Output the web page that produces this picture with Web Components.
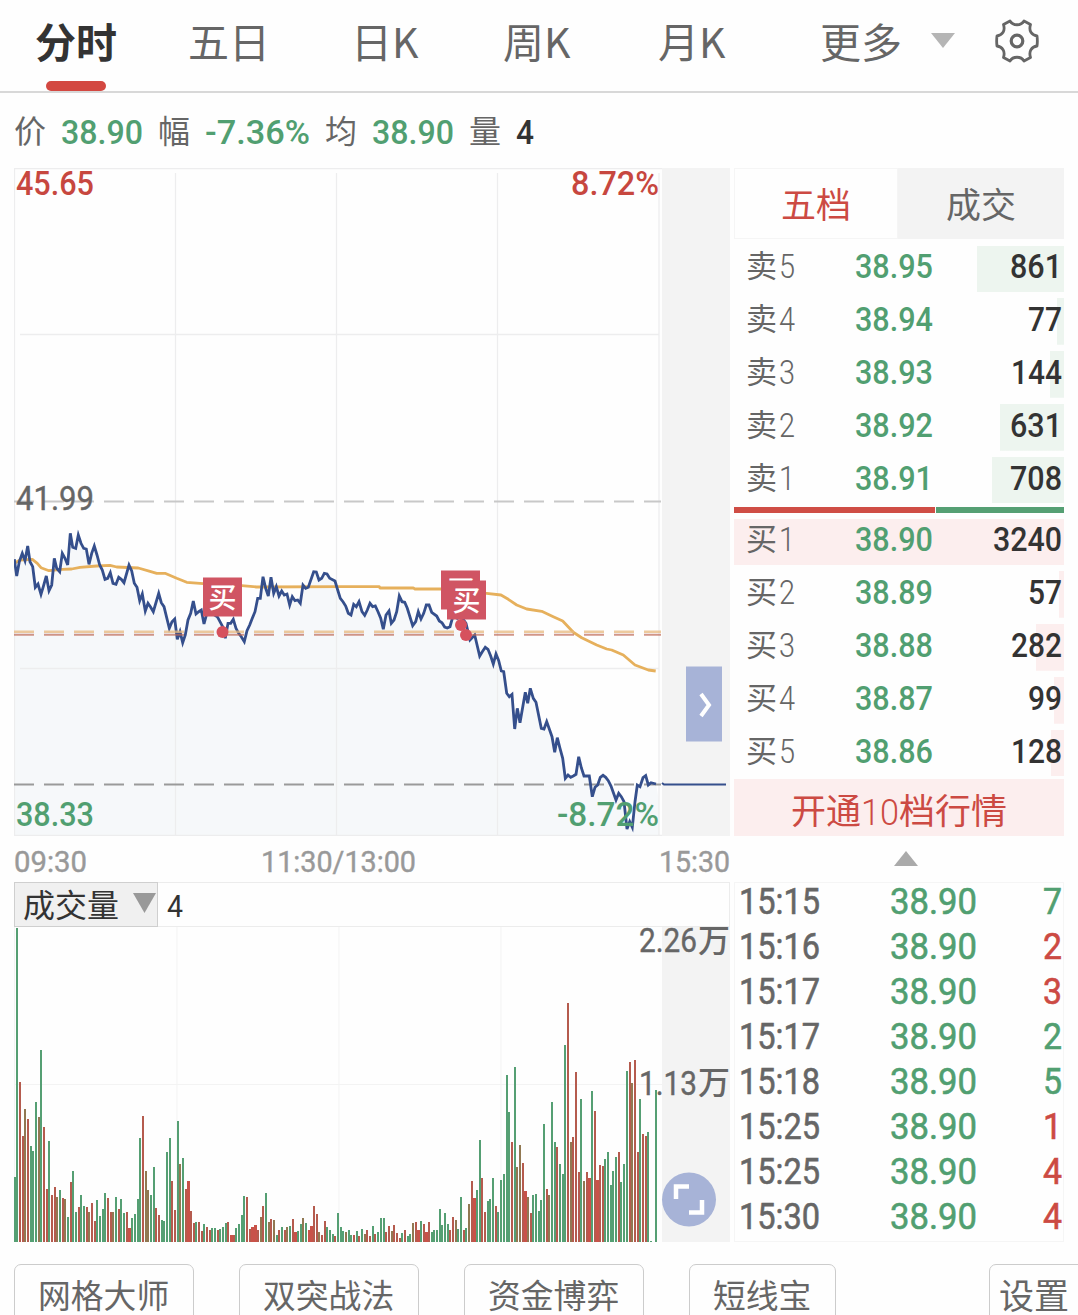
<!DOCTYPE html>
<html lang="zh-CN">
<head>
<meta charset="utf-8">
<title>分时</title>
<style>
html, body{ margin:0; padding:0; }
body{
    width       : 1078px;
    height      : 1315px;
    overflow    : hidden;
    background  : #fefefe;
    color       : #666;
    font-family : Roboto, "Noto Sans CJK SC", sans-serif;
    --red       : #cc4a43;
    --green     : #519f71;
    --line      : #f0f0f0;
    --pane      : #f3f3f3;
}
main{
    display                 : grid;
    grid-template-columns   : 716px 330px;
    column-gap              : 4px;
    margin-left             : 14px;
    height                  : 1074px;
}
</style>
</head>
<body>
<chart-tabs></chart-tabs>
<quote-line>
    <fit-text w="32" size="32">价</fit-text>
    <fit-text w="82" size="33" weight="500" color="var(--green)">38.90</fit-text>
    <fit-text w="32" size="32">幅</fit-text>
    <fit-text w="105" size="33" weight="500" color="var(--green)">-7.36%</fit-text>
    <fit-text w="32" size="32">均</fit-text>
    <fit-text w="82" size="33" weight="500" color="var(--green)">38.90</fit-text>
    <fit-text w="32" size="32">量</fit-text>
    <fit-text w="18" size="33" weight="500" color="#333">4</fit-text>
</quote-line>
<main>
    <section>
        <price-chart></price-chart>
        <time-axis></time-axis>
        <volume-head></volume-head>
        <volume-chart></volume-chart>
    </section>
    <section>
        <order-book></order-book>
        <trade-list></trade-list>
    </section>
</main>
<tool-bar>
    <tool-button style="width:180px">网格大师</tool-button>
    <tool-button style="width:180px">双突战法</tool-button>
    <tool-button style="width:180px">资金博弈</tool-button>
    <tool-button style="width:147px">短线宝</tool-button>
    <tool-button class="last" style="width:104px">设置</tool-button>
</tool-bar>

<script>
// #region HELPERS
function attach( elm, html ){
    elm.attachShadow( { mode: 'open' } );
    elm.shadowRoot.innerHTML = html;
    return elm.shadowRoot;
}

// One line of text squeezed to a fixed width
function fit( txt, w, size, weight=400, color='currentColor' ){
    return `<fit-text w="${w}" size="${size}" weight="${weight}" color="${color}">${txt}</fit-text>`;
}
// #endregion

// #region FIT TEXT
class FitText extends HTMLElement{
    connectedCallback(){
        if( this.shadowRoot ) return;
        const w     = parseFloat( this.getAttribute( 'w' ) );
        const size  = parseFloat( this.getAttribute( 'size' ) );
        const color = this.getAttribute( 'color' ) || 'currentColor';
        const txt   = this.textContent;
        const base  = size * ( /[^\x00-\x7f]/.test( txt ) ? 0.85 : 0.855 );
        attach( this, `
        <style>
        :host{ display:block; flex:none; width:${w}px; height:${size}px; }
        svg{ display:block; overflow:visible; }
        text{
            font-size    : ${size}px;
            font-weight  : ${ this.getAttribute( 'weight' ) || 400 };
            fill         : ${color};
            stroke       : ${color};
            stroke-width : var( --embolden, 0 );
        }
        </style>
        <svg width="${w}" height="${size}"><text y="${base}" textLength="${w}" lengthAdjust="spacingAndGlyphs">${txt}</text></svg>` );
    }
}
customElements.define( 'fit-text', FitText );
// #endregion

// #region TABS
class ChartTabs extends HTMLElement{
    constructor(){
        super();
        attach( this, `
        <style>
        :host{
            display                 : grid;
            grid-template-columns   : 153px 163px 152px 155px 162px 111px 62px 60px;
            box-sizing              : border-box;
            height                  : 93px;
            padding-left            : 35px;
            border-bottom           : 2px solid #d8d8d8;
            font-family             : "Noto Sans CJK SC", sans-serif;
            font-size               : 41px;
            line-height             : 80px;
        }
        .tab{ white-space:nowrap; }
        .on{
            display         : flex;
            flex-direction  : column;
            width           : 82px;
            color           : #333;
            font-weight     : 700;
        }
        .on span{ height:81px; }
        .on::after{
            content         : "";
            width           : 60px;
            height          : 10px;
            margin-left     : 11px;
            border-radius   : 5px;
            background      : #d34841;
        }
        svg{ display:block; }
        .caret{ margin-top:33px; }
        .gear{ margin-top:17px; }
        </style>
        <div class="tab on"><span>分时</span></div>
        <div class="tab">五日</div>
        <div class="tab">日K</div>
        <div class="tab">周K</div>
        <div class="tab">月K</div>
        <div class="tab">更多</div>
        <svg class="caret" width="24" height="15"><path d="M0 0H24L12 15Z" fill="#b5b5b5"/></svg>
        <svg class="gear" width="48" height="48" viewBox="-24 -24 48 48" fill="none" stroke="#666" stroke-width="2.800" stroke-linejoin="round">
            <path d="M-7 -20 C-4 -15 4 -15 7 -20 L13.500 -16.500 C11.500 -10 14.500 -6 20 -5 Q20.700 0 20 5 C14.500 6 11.500 10 13.500 16.500 L7 20 C4 15 -4 15 -7 20 L-13.500 16.500 C-11.500 10 -14.500 6 -20 5 Q-20.700 0 -20 -5 C-14.500 -6 -11.500 -10 -13.500 -16.500 Z"/>
            <circle r="5.800" stroke-width="3.200"/>
        </svg>` );
    }
}
customElements.define( 'chart-tabs', ChartTabs );

class QuoteLine extends HTMLElement{
    constructor(){
        super();
        attach( this, `
        <style>
        :host{
            display         : flex;
            align-items     : center;
            gap             : 15px;
            box-sizing      : border-box;
            height          : 75px;
            padding         : 3px 0 0 14px;
        }
        </style>
        <slot></slot>` );
    }
}
customElements.define( 'quote-line', QuoteLine );
// #endregion

// #region PRICE CHART
const PRICE_A = '43,268 50,318 58,275 67,250 75,272 83,228 90,275 98,290 106,352 114,342 123,373 130,350 139,318 147,362 155,345 163,265 170,295 179,305 187,250 195,265 203,285 211,190 218,232 227,235 235,195 243,220 251,235 259,237 267,283 275,250 283,228 291,255 299,285 307,300 315,328 323,325 331,308 339,340 348,343 356,322 364,328 372,338 387,285 395,303 403,340 411,352 419,392 427,372 436,423 444,400 452,412 460,425 476,370 484,398 492,410 508,475 516,455 524,447 532,508 540,485 548,518 556,495 564,450 572,430 580,393 588,432 596,425 604,420 612,462 620,432 636,430 652,440 668,470 676,505 684,460 692,460 700,448 708,475 716,490 724,500 733,515 741,482 749,465 757,445 765,425 773,385 781,385 789,320 797,355 805,378 813,322 821,370 829,350 837,378 845,363 853,375 861,372 869,405 877,380 885,392 893,390 901,400 909,345 917,355 925,352 941,305 949,306 957,330 965,325 973,310 981,312 989,325 1005,333 1013,360 1021,385 1029,395 1037,408 1045,430 1053,435 1061,403 1069,410 1077,395';
const PRICE_B = '66,215 74,226 82,210 90,190 98,200 106,198 114,215 122,235 130,268 138,225 147,213 154,250 162,240 170,215 178,168 186,185 194,187 202,205 218,257 227,245 235,215 243,237 251,220 259,195 267,195 275,217 290,228 298,243 306,248 314,261 322,264 330,260 340,225 352,235 364,230 378,250 390,300 404,285 419,348 427,335 436,322 444,328 452,348 460,372 468,342 476,362 484,393 491,395 500,460 508,470 516,463 524,567 532,505 540,548 556,457 563,490 571,445 580,475 588,487 604,565 612,567 620,545 628,567 636,590 644,637 652,593 660,625 668,655 676,715 684,705 692,712 700,708 708,703 716,650 724,683 732,708 748,708 757,770 765,742 773,735 781,712 789,706 797,712 805,722 813,738 828,780 836,760 844,770 852,785 861,867 869,845 877,862 885,785 892,735 900,740 909,713 917,707 925,735 933,728 948,732';
const AVG_A = '43,280 60,270 97,268 112,280 123,293 147,302 187,298 215,297 240,292 290,288 330,286 350,291 415,294 450,304 470,310 495,310 530,325 560,337 610,341 725,347 770,351';
const AVG_B = '0,140 118,140 120,144 220,144 225,147 303,147 440,160 483,165 505,178 530,195 560,207 605,214 640,230 668,243 700,277 725,293 770,315 800,327 815,330 850,345 885,375 925,390 947,393';

// Points are stored in thirds of a pixel, each half with its own origin
function points( str, ox, oy ){
    return str.split( ' ' ).map( p=>{
        const [ x, y ] = p.split( ',' );
        return ( ox + x / 3 ).toFixed( 1 ) + ',' + ( oy + y / 3 ).toFixed( 1 );
    }).join( ' ' );
}

function dash( y, color, w=2 ){
    return `<path d="M14 ${y}H661" stroke="${color}" stroke-width="${w}" stroke-dasharray="20 10"/>`;
}

function buyMark( x, y ){
    return `<rect x="${x}" y="${y}" width="39" height="39" fill="#d05563"/>
        <text class="buy" x="${x + 5.5}" y="${y + 30}">买</text>`;
}

class PriceChart extends HTMLElement{
    constructor(){
        super();
        const price = points( PRICE_A, 0, 470 ) + ' ' + points( PRICE_B, 340, 540 );
        const avg   = points( AVG_A, 0, 470 ) + ' ' + points( AVG_B, 340, 540 );
        attach( this, `
        <style>
        :host{ display:block; height:668px; }
        svg{ display:block; }
        text{ font-size:33px; font-weight:500; }
        .buy{ font:500 28px "Noto Sans CJK SC"; fill:#fff; }
        </style>
        <svg width="716" height="668" viewBox="14 168 716 668" fill="none">
            <rect x="662" y="168" width="68" height="668" fill="#f3f3f3"/>
            <polygon points="14,836 ${price} 659,801 659,836" fill="#f6f8fa"/>
            <path d="M14 168.500H662M14.500 168V836M20 334.500H659M20 668.500H659M14 835.500H662M175.500 173V836M336.500 173V836M497.500 173V836M659 173V836" stroke="#ededee" stroke-width="1.300"/>
            ${dash( 501.5, '#c8c8c8' )}
            <text x="16" y="510" textLength="78" lengthAdjust="spacingAndGlyphs" fill="#666" stroke="#666" stroke-width=".4" style="font-weight:400">41.99</text>
            ${dash( 784.6, '#9a9a9a' )}
            <polyline points="${avg}" stroke="#e6b05c" stroke-width="2.800" stroke-linejoin="round"/>
            <polyline points="${price}" stroke="#354f8c" stroke-width="2.800"/>
            ${dash( 631.8, 'rgba(231,184,126,.75)', 2.6 )}
            ${dash( 634.8, 'rgba(190,105,85,.7)' )}
            <path d="M662 783L664 784.600H726" stroke="#354f8c" stroke-width="2"/>
            ${buyMark( 203, 577.5 )}
            ${buyMark( 441, 570.5 )}
            ${buyMark( 447, 580.5 )}
            <g fill="#d6515d"><circle cx="222.500" cy="632" r="6"/><circle cx="461" cy="625" r="6"/><circle cx="466" cy="635" r="6"/></g>
            <g fill="#c7473f">
                <text x="16" y="195" textLength="78" lengthAdjust="spacingAndGlyphs">45.65</text>
                <text x="571" y="195" textLength="88" lengthAdjust="spacingAndGlyphs">8.72%</text>
            </g>
            <g fill="#519f71">
                <text x="16" y="826" textLength="78" lengthAdjust="spacingAndGlyphs">38.33</text>
                <text x="557" y="826" textLength="102" lengthAdjust="spacingAndGlyphs">-8.72%</text>
            </g>
            <rect x="686" y="666.500" width="36" height="75" fill="#a7b3d7"/>
            <path d="M701 694L709 705L701 716" stroke="#fff" stroke-width="4"/>
        </svg>` );
    }
}
customElements.define( 'price-chart', PriceChart );

class TimeAxis extends HTMLElement{
    constructor(){
        super();
        attach( this, `
        <style>
        :host{
            display         : flex;
            justify-content : space-between;
            align-items     : center;
            height          : 46px;
            color           : #999;
            --embolden      : .4px;
        }
        fit-text{ margin-top:5px; }
        .mid{ margin-right:70px; }
        </style>
        ${fit( '09:30', 73, 29 )}
        <div class="mid">${fit( '11:30/13:00', 155, 29 )}</div>
        ${fit( '15:30', 71, 29 )}` );
    }
}
customElements.define( 'time-axis', TimeAxis );
// #endregion

// #region VOLUME
class VolumeHead extends HTMLElement{
    constructor(){
        super();
        attach( this, `
        <style>
        :host{
            display     : flex;
            box-sizing  : border-box;
            height      : 45px;
            border      : 1px solid #ececec;
            border-left : 0;
            gap         : 9px;
            align-items : center;
        }
        .pick{
            display     : flex;
            align-items : center;
            gap         : 14px;
            box-sizing  : border-box;
            width       : 144px;
            height      : 45px;
            margin      : -1px 0;
            padding     : 2px 0 0 8px;
            border      : 1px solid #cfcfcf;
            background  : #f0f0f0;
        }
        svg{ margin-top:-6px; }
        fit-text{ margin-top:3px; }
        .pick fit-text{ margin-top:1px; }
        </style>
        <div class="pick">
            ${fit( '成交量', 96, 32, 400, '#333' )}
            <svg width="23" height="20"><path d="M0 0H23L11.500 20Z" fill="#999"/></svg>
        </div>
        ${fit( '4', 16, 32, 400, '#333' )}` );
    }
}
customElements.define( 'volume-head', VolumeHead );

// One entry a minute: colour, then the bar's top in thirds of a pixel
const VOLUME = `g770 g25 r485 r647 b567 r597 g677 g692 g545 b590 g390 r620 r806 g662 r824 r800 b830 g810 r833 b836
g890 r785 g752 g875 r860 g825 g857 r860 b875 r848 r902 g840 g887 g866 g818 r833 r875 b875 g830 r866
g836 g880 r875 R923 g893 g881 g836 g653 r587 b752 b809 g824 g740 r863 r884 g899 g902 g695 g653 r782
r869 g602 b731 g713 r806 R782 r872 r908 g906 r906 r932 g911 r920 r929 g923 g923 r929 g926 g920 g908
r906 R944 r944 g923 g911 g884 g827 r830 r926 R920 R914 r929 b890 r857 g818 b905 r896 b899 g944 r929
g920 r929 b920 g917 r896 R935 g932 g911 b893 g908 R929 R917 r857 r881 b935 r944 r902 g920 g929 g941
r947 g878 g920 g932 b935 g929 g944 r944 g932 r947 g926 b941 r929 r947 g917 r941 g935 g893 g893 r935
r917 b932 r914 r938 r953 g938 r929 g947 g941 b908 r905 R929 g902 r911 R935 r905 g935 g929 g929 g866
g914 g878 g911 r929 r890 b899 g926 g830 r929 g923 b851 r782 R833 g809 g659 r773 r875 g842 g836 g773
r857 g875 g779 g761 g464 g575 r665 g440 b740 b674 r728 R812 b830 r878 g824 g821 g872 g839 g611 r806
b824 g545 g665 r680 g731 g761 g374 r248 b665 r650 r455 r755 g536 b782 r755 R773 g512 r572 R779 r734
r737 g716 g695 g794 g752 g710 r695 g785 g731 g452 r425 b488 r419 r695 g536 r641 r647 g635 g962 g965 g509`;
const BAR_COLOR = { g: '#559f73', r: '#b55b4e', R: '#c85249', b: '#917852' };

class VolumeChart extends HTMLElement{
    constructor(){
        super();
        let bars = '';
        VOLUME.split( /\s+/ ).forEach( ( v, i )=>{
            const x = Math.floor( 2.674 * i );
            const y = Math.round( v.slice( 1 ) / 3 ) - 7;
            const w = ( v[0] == 'R' ) ? 3 : 2;
            bars += `<rect x="${x}" y="${y}" width="${w}" height="${315 - y}" fill="${BAR_COLOR[ v[0] ]}"/>`;
        });
        attach( this, `
        <style>
        :host{ display:block; height:315px; }
        svg{ display:block; }
        text{ font-size:33px; fill:#666; stroke:#666; stroke-width:.4px; }
        .wan{ font-family:"Noto Sans CJK SC"; font-size:32px; font-weight:500; stroke:none; }
        </style>
        <svg width="716" height="315">
            <rect x="648" width="68" height="315" fill="#f3f3f3"/>
            <path d="M.5 0V315M163 0V315M325 0V315M487 0V315M0 157.500H648" stroke="#f3f3f3" fill="none"/>
            ${bars}
            <text x="625" y="25" textLength="58" lengthAdjust="spacingAndGlyphs">2.26</text>
            <text class="wan" x="684" y="24.500">万</text>
            <text x="625" y="168" textLength="58" lengthAdjust="spacingAndGlyphs">1.13</text>
            <text class="wan" x="684" y="166.500">万</text>
            <circle cx="675" cy="272.500" r="27" fill="#a7b3d7"/>
            <path d="M662 272V259.500H675M688 273V285.500H675" stroke="#fff" stroke-width="4.500" fill="none"/>
        </svg>` );
    }
}
customElements.define( 'volume-chart', VolumeChart );
// #endregion

// #region ORDER BOOK
class LevelRow extends HTMLElement{
    connectedCallback(){
        if( this.shadowRoot ) return;
        const [ name, price, vol, bar, w ] = this.getAttribute( 'data' ).split( ',' );
        const tint = name[0] == '卖' ? '#edf5ef' : '#fceeee';
        attach( this, `
        <style>
        :host{
            display                 : grid;
            grid-template-columns   : 109px 1fr auto;
            align-items             : center;
            box-sizing              : border-box;
            height                  : 46.500px;
            padding                 : 0 2px 4px 12px;
            background              : linear-gradient( ${tint}, ${tint} ) right / ${bar}px 100% no-repeat;
        }
        .name{ display:flex; align-items:center; gap:2px; }
        </style>
        <div class="name">${fit( name[0], 31, 31 )}${fit( name[1], 16, 33, 300 )}</div>
        ${fit( price, 78, 33, 500, 'var(--green)' )}
        ${fit( vol, w, 33, 500, '#333' )}` );
    }
}
customElements.define( 'level-row', LevelRow );

class OrderBook extends HTMLElement{
    constructor(){
        super();
        const row = d=>`<level-row data="${d}"></level-row>`;
        attach( this, `
        <style>
        :host{ display:block; height:714px; }
        .tabs{
            display                 : grid;
            grid-template-columns   : 164px 166px;
            height                  : 71px;
            font                    : 35px/69px "Noto Sans CJK SC", sans-serif;
            text-align              : center;
        }
        .tabs div:first-child{ color:var(--red); box-shadow:inset 0 0 0 1px #f5f5f5; }
        .tabs div:last-child{ background:var(--pane); }
        .side{
            display         : flex;
            flex-direction  : column;
            gap             : 6.300px;
        }
        .sell{ padding-top:6.700px; }
        .ratio{
            display                 : grid;
            grid-template-columns   : 201px 128px;
            gap                     : 1px;
            height                  : 6px;
            margin                  : 3.300px 0 6px;
        }
        .ratio i:first-child{ background:#cf4d45; }
        .ratio i:last-child{ background:#559f73; }
        .open{
            display         : flex;
            align-items     : center;
            justify-content : center;
            box-sizing      : border-box;
            height          : 57px;
            margin-top      : 3px;
            padding-top     : 7px;
            background      : #fceeee;
            color           : var(--red);
        }
        .up{ display:block; margin:15px auto 0 160px; }
        </style>
        <div class="tabs"><div>五档</div><div>成交</div></div>
        <div class="side sell">
            ${[ '卖5,38.95,861,87,52', '卖4,38.94,77,7,34', '卖3,38.93,144,14,51', '卖2,38.92,631,64,52', '卖1,38.91,708,72,52' ].map( row ).join( '' )}
        </div>
        <div class="ratio"><i></i><i></i></div>
        <div class="side">
            ${[ '买1,38.90,3240,330,69', '买2,38.89,57,5,34', '买3,38.88,282,28,51', '买4,38.87,99,10,34', '买5,38.86,128,13,51' ].map( row ).join( '' )}
        </div>
        <div class="open">${fit( '开通', 70, 35 )}${fit( '10', 38, 37, 300 )}${fit( '档行情', 108, 35 )}</div>
        <svg class="up" width="24" height="15"><path d="M0 15H24L12 0Z" fill="#aaa"/></svg>` );
    }
}
customElements.define( 'order-book', OrderBook );

class TradeList extends HTMLElement{
    constructor(){
        super();
        const rows = [
            [ '15:15', 7, 'green' ], [ '15:16', 2, 'red' ], [ '15:17', 3, 'red' ], [ '15:17', 2, 'green' ],
            [ '15:18', 5, 'green' ], [ '15:25', 1, 'red' ], [ '15:25', 4, 'red' ], [ '15:30', 4, 'red' ],
        ];
        attach( this, `
        <style>
        :host{
            display     : flex;
            flex-direction : column;
            box-sizing  : border-box;
            height      : 360px;
            box-shadow  : inset 0 0 0 1px #f5f5f5;
            --embolden  : .6px;
        }
        .row{
            display                 : grid;
            grid-template-columns   : 151px 1fr auto;
            align-items             : center;
            height                  : 45px;
            padding                 : 0 2px 9px 5px;
            box-sizing              : border-box;
        }
        </style>
        ${rows.map( r=>`<div class="row">
            ${fit( r[0], 81, 37 )}${fit( '38.90', 87, 37, 400, 'var(--green)' )}${fit( r[1], 19, 37, 400, `var(--${r[2]})` )}
        </div>` ).join( '' )}` );
    }
}
customElements.define( 'trade-list', TradeList );
// #endregion

// #region TOOLBAR
class ToolBar extends HTMLElement{
    constructor(){
        super();
        attach( this, `
        <style>
        :host{ display:flex; gap:45px; margin:22px 0 0 14px; width:1100px; }
        ::slotted( .last ){ margin-left:108px; }
        </style>
        <slot></slot>` );
    }
}
customElements.define( 'tool-bar', ToolBar );

class ToolButton extends HTMLElement{
    constructor(){
        super();
        attach( this, `
        <style>
        :host{
            display         : block;
            flex            : none;
            box-sizing      : border-box;
            height          : 64px;
            padding-left    : 23px;
            border          : 1px solid #ccc;
            border-radius   : 7px;
            font            : 32.800px/58px "Noto Sans CJK SC", sans-serif;
            white-space     : nowrap;
        }
        :host( .last ){ padding-left:9px; font-size:35px; }
        </style>
        <slot></slot>` );
    }
}
customElements.define( 'tool-button', ToolButton );
// #endregion
</script>
</body>
</html>
